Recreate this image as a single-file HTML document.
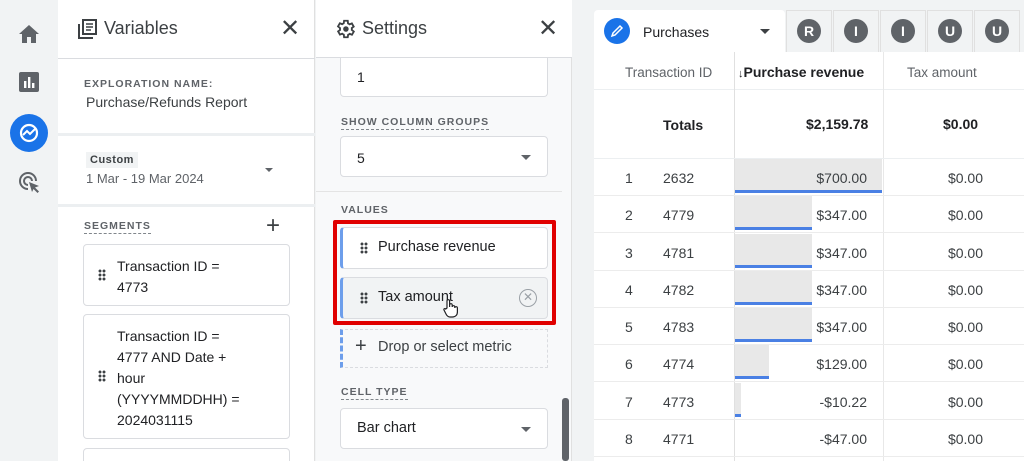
<!DOCTYPE html>
<html><head><meta charset="utf-8"><style>
*{box-sizing:border-box;margin:0;padding:0}
html,body{width:1024px;height:461px;overflow:hidden}
body{background:#f1f3f4;font-family:"Liberation Sans",Arial,sans-serif;color:#202124;position:relative}
.a{position:absolute}
.lbl{font-size:11px;letter-spacing:1px;color:#5f6368;font-weight:bold}
.dash{border-bottom:1px dashed #80868b;padding-bottom:1px}
.box{position:absolute;background:#fff;border:1px solid #dadce0;border-radius:4px}
.caret{position:absolute;width:0;height:0;border-left:5px solid transparent;border-right:5px solid transparent;border-top:5px solid #5f6368}
.grip{position:absolute;width:8px;height:12px;background:radial-gradient(circle,#3c4043 1.3px,transparent 1.6px) 0 0/4px 4px}
.row{position:absolute;left:594px;width:430px;height:37px;border-bottom:1px solid #ececec;font-size:14px;color:#3c4043}
.row span{position:absolute;top:11px}
.bar{position:absolute;left:141px;top:0;height:34px;background:#e8e8e8;border-bottom:3px solid #4a80e4}
.tab{position:absolute;top:10px;width:46px;height:42px;background:#f1f3f4;border:1px solid #e0e0e0;border-bottom:none}
.tab i{position:absolute;left:10px;top:8px;width:24px;height:24px;border-radius:50%;background:#5f6368;color:#fff;font-style:normal;font-size:14px;font-weight:bold;text-align:center;line-height:24px}
</style></head><body>
<div class="a" style="left:0;top:0;width:58px;height:461px;background:#f1f3f4"></div>
<svg class="a" style="left:18px;top:24px" width="22" height="20" viewBox="0 0 22 20"><path d="M11 1L1 10h3v9h5v-6h4v6h5v-9h3z" fill="#5f6368"/></svg>
<svg class="a" style="left:19px;top:72px" width="20" height="20"><rect width="20" height="20" rx="2" fill="#5f6368"/><rect x="5" y="9" width="2.4" height="7" fill="#fff"/><rect x="9" y="5" width="2.4" height="11" fill="#fff"/><rect x="13" y="11" width="2.4" height="5" fill="#fff"/></svg>
<div class="a" style="left:10px;top:114px;width:38px;height:38px;border-radius:50%;background:#1a73e8"></div>
<svg class="a" style="left:18px;top:122px" width="22" height="22" viewBox="0 0 22 22"><circle cx="11" cy="11" r="8" fill="none" stroke="#fff" stroke-width="2.2"/><path d="M5 13l4-4 3 3 5-5" fill="none" stroke="#fff" stroke-width="2"/></svg>
<svg class="a" style="left:18px;top:171px" width="24" height="24" viewBox="0 0 24 24"><path d="M10 18a8 8 0 1 1 8-8M10 14a4 4 0 1 1 4-4" fill="none" stroke="#5f6368" stroke-width="2"/><path d="M11 11l10 4-4 1.5 4 4-1.5 1.5-4-4L14 21z" fill="#5f6368"/></svg>
<div class="a" style="left:58px;top:0;width:257px;height:461px;background:#fff;border-right:1px solid #e0e0e0"></div>
<svg class="a" style="left:76px;top:18px" width="22" height="22" viewBox="0 0 22 22"><path d="M3 6v14h14" fill="none" stroke="#3c4043" stroke-width="2"/><rect x="7" y="2" width="13" height="14" fill="none" stroke="#3c4043" stroke-width="2"/><path d="M10 6h7M10 9h7M10 12h5" stroke="#3c4043" stroke-width="1.6"/></svg>
<div class="a" style="left:104px;top:18px;font-size:18px;color:#3c4043">Variables</div>
<div class="a" style="left:280px;top:14px;font-size:24px;color:#3c4043">✕</div>
<div class="a" style="left:58px;top:58px;width:257px;height:1px;background:#dadce0"></div>
<div class="a lbl" style="left:84px;top:78px;font-size:10.5px">EXPLORATION NAME:</div>
<div class="a" style="left:86px;top:94px;font-size:14px;color:#3c4043">Purchase/Refunds Report</div>
<div class="a" style="left:58px;top:133px;width:257px;height:3px;background:#eceff1"></div>
<div class="a" style="left:86px;top:152px;padding:2px 4px;background:#f1f3f4;font-size:11px;font-weight:bold;color:#3c4043;letter-spacing:.5px">Custom</div>
<div class="a" style="left:86px;top:171px;font-size:13px;color:#5f6368">1 Mar - 19 Mar 2024</div>
<div class="caret" style="left:265px;top:168px;border-width:4px 4px 0;"></div>
<div class="a" style="left:58px;top:204px;width:257px;height:3px;background:#eceff1"></div>
<div class="a lbl dash" style="left:84px;top:220px;font-size:10.5px">SEGMENTS</div>
<div class="a" style="left:266px;top:212px;font-size:24px;color:#3c4043;font-weight:300">+</div>
<div class="box" style="left:83px;top:244px;width:207px;height:62px"></div>
<div class="grip" style="left:98px;top:269px"></div>
<div class="a" style="left:117px;top:256px;font-size:14px;line-height:21px;color:#202124">Transaction ID =<br>4773</div>
<div class="box" style="left:83px;top:314px;width:207px;height:125px"></div>
<div class="grip" style="left:98px;top:370px"></div>
<div class="a" style="left:117px;top:326px;font-size:14px;line-height:21px;color:#202124">Transaction ID =<br>4777 AND Date +<br>hour<br>(YYYYMMDDHH) =<br>2024031115</div>
<div class="box" style="left:83px;top:448px;width:207px;height:30px"></div>
<div class="a" style="left:316px;top:0;width:256px;height:461px;background:#f8f9fa;border-right:1px solid #e0e0e0"></div>
<div class="a" style="left:316px;top:0;width:256px;height:58px;background:#fff;border-bottom:1px solid #dadce0"></div>
<svg class="a" style="left:334px;top:18px" width="22" height="22" viewBox="0 0 24 24"><path d="M19.4 13a7.5 7.5 0 0 0 0-2l2.1-1.6-2-3.5-2.5 1a7 7 0 0 0-1.7-1L15 3h-4l-.4 2.7a7 7 0 0 0-1.7 1l-2.5-1-2 3.5L6.6 11a7.5 7.5 0 0 0 0 2l-2.1 1.6 2 3.5 2.5-1a7 7 0 0 0 1.7 1L11 21h4l.4-2.7a7 7 0 0 0 1.7-1l2.5 1 2-3.5z" fill="none" stroke="#3c4043" stroke-width="2"/><circle cx="13" cy="12" r="3" fill="#3c4043"/></svg>
<div class="a" style="left:362px;top:18px;font-size:18px;color:#3c4043">Settings</div>
<div class="a" style="left:538px;top:14px;font-size:24px;color:#3c4043">✕</div>
<div class="box" style="left:340px;top:58px;width:208px;height:39px;border-top:none;border-radius:0 0 4px 4px"></div>
<div class="a" style="left:357px;top:69px;font-size:14px">1</div>
<div class="a lbl dash" style="left:341px;top:116px;font-size:10.5px">SHOW COLUMN GROUPS</div>
<div class="box" style="left:340px;top:136px;width:208px;height:41px"></div>
<div class="a" style="left:357px;top:150px;font-size:14px">5</div>
<div class="caret" style="left:521px;top:155px"></div>
<div class="a" style="left:316px;top:191px;width:246px;height:1px;background:#e4e4e4"></div>
<div class="a lbl" style="left:341px;top:204px;font-size:10.5px">VALUES</div>
<div class="box" style="left:340px;top:227px;width:208px;height:42px;border-left:3px solid #6d9eeb"></div>
<div class="grip" style="left:360px;top:242px"></div>
<div class="a" style="left:378px;top:239px;font-size:14.5px">Purchase revenue</div>
<div class="box" style="left:340px;top:277px;width:208px;height:42px;background:#f1f3f4;border-left:3px solid #6d9eeb"></div>
<div class="grip" style="left:360px;top:292px"></div>
<div class="a" style="left:378px;top:289px;font-size:14.5px">Tax amount</div>
<div class="a" style="left:519px;top:289px;width:18px;height:18px;border:1.5px solid #9aa0a6;border-radius:50%;color:#9aa0a6;font-size:12px;text-align:center;line-height:15px">✕</div>
<svg class="a" style="left:443px;top:298px" width="16" height="20" viewBox="0 0 16 20"><path d="M4 10V3a1.3 1.3 0 0 1 2.6 0v6V7a1.3 1.3 0 0 1 2.6 0v2a1.3 1.3 0 0 1 2.6 0v1a1.3 1.3 0 0 1 2.6 0v4c0 3-2 5-5 5H7c-2 0-3-1-4-3l-2-4c-.5-1 .8-2 1.7-1z" fill="#fff" stroke="#202124" stroke-width="1.2"/></svg>
<div class="a" style="left:333px;top:220px;width:223px;height:105px;border:4px solid #e00000;border-radius:2px"></div>
<div class="a" style="left:340px;top:329px;width:208px;height:39px;border:1px dashed #dadce0;border-left:3px dashed #6d9eeb"></div>
<div class="a" style="left:355px;top:335px;font-size:20px;color:#3c4043">+</div>
<div class="a" style="left:378px;top:339px;font-size:14.5px;color:#3c4043">Drop or select metric</div>
<div class="a lbl dash" style="left:341px;top:386px;font-size:10.5px">CELL TYPE</div>
<div class="box" style="left:340px;top:408px;width:208px;height:41px"></div>
<div class="a" style="left:357px;top:420px;font-size:14.5px">Bar chart</div>
<div class="caret" style="left:521px;top:427px"></div>
<div class="a" style="left:562px;top:398px;width:7px;height:63px;background:#5f6368;border-radius:3px"></div>
<div class="a" style="left:594px;top:52px;width:430px;height:409px;background:#fff"></div>
<div class="a" style="left:594px;top:10px;width:191px;height:43px;background:#fff;border-radius:4px 4px 0 0"></div>
<div class="a" style="left:604px;top:18px;width:26px;height:26px;border-radius:50%;background:#1a73e8"></div>
<svg class="a" style="left:610px;top:24px" width="14" height="14" viewBox="0 0 14 14"><path d="M2 12l1-3 7-7 2 2-7 7z" fill="none" stroke="#fff" stroke-width="1.5"/></svg>
<div class="a" style="left:643px;top:24px;font-size:14px;color:#202124">Purchases</div>
<div class="caret" style="left:760px;top:29px;border-top-color:#3c4043"></div>
<div class="tab" style="left:786px"><i>R</i></div>
<div class="tab" style="left:833px"><i>I</i></div>
<div class="tab" style="left:880px"><i>I</i></div>
<div class="tab" style="left:927px"><i>U</i></div>
<div class="tab" style="left:974px"><i>U</i></div>
<div class="a" style="left:594px;top:89px;width:430px;height:1px;background:#eceff1"></div>
<div class="a" style="left:734px;top:52px;width:1px;height:409px;background:#e0e0e0"></div>
<div class="a" style="left:883px;top:52px;width:1px;height:409px;background:#e8e8e8"></div>
<div class="a" style="left:625px;top:65px;font-size:13.5px;color:#5f6368">Transaction ID</div>
<div class="a" style="left:738px;top:64px;font-size:14px;font-weight:bold;color:#202124"><span style="font-size:11px;font-weight:normal">↓</span>Purchase revenue</div>
<div class="a" style="left:907px;top:65px;font-size:13.5px;color:#5f6368">Tax amount</div>
<div class="a" style="left:663px;top:117px;font-size:14px;font-weight:bold">Totals</div>
<div class="a" style="left:806px;top:116px;font-size:14px;font-weight:bold">$2,159.78</div>
<div class="a" style="left:943px;top:116px;font-size:14px;font-weight:bold">$0.00</div>
<div class="a" style="left:594px;top:158px;width:430px;height:1px;background:#eceff1"></div>
<div class="row" style="top:159px"><div class="bar" style="width:147px"></div><span style="left:31px">1</span><span style="left:69px">2632</span><span style="right:157px">$700.00</span><span style="right:41px">$0.00</span></div>
<div class="row" style="top:196px"><div class="bar" style="width:77px"></div><span style="left:31px">2</span><span style="left:69px">4779</span><span style="right:157px">$347.00</span><span style="right:41px">$0.00</span></div>
<div class="row" style="top:234px"><div class="bar" style="width:77px"></div><span style="left:31px">3</span><span style="left:69px">4781</span><span style="right:157px">$347.00</span><span style="right:41px">$0.00</span></div>
<div class="row" style="top:271px"><div class="bar" style="width:77px"></div><span style="left:31px">4</span><span style="left:69px">4782</span><span style="right:157px">$347.00</span><span style="right:41px">$0.00</span></div>
<div class="row" style="top:308px"><div class="bar" style="width:77px"></div><span style="left:31px">5</span><span style="left:69px">4783</span><span style="right:157px">$347.00</span><span style="right:41px">$0.00</span></div>
<div class="row" style="top:345px"><div class="bar" style="width:34px"></div><span style="left:31px">6</span><span style="left:69px">4774</span><span style="right:157px">$129.00</span><span style="right:41px">$0.00</span></div>
<div class="row" style="top:383px"><div class="bar" style="width:6px"></div><span style="left:31px">7</span><span style="left:69px">4773</span><span style="right:157px">-$10.22</span><span style="right:41px">$0.00</span></div>
<div class="row" style="top:420px"><span style="left:31px">8</span><span style="left:69px">4771</span><span style="right:157px">-$47.00</span><span style="right:41px">$0.00</span></div>
</body></html>
